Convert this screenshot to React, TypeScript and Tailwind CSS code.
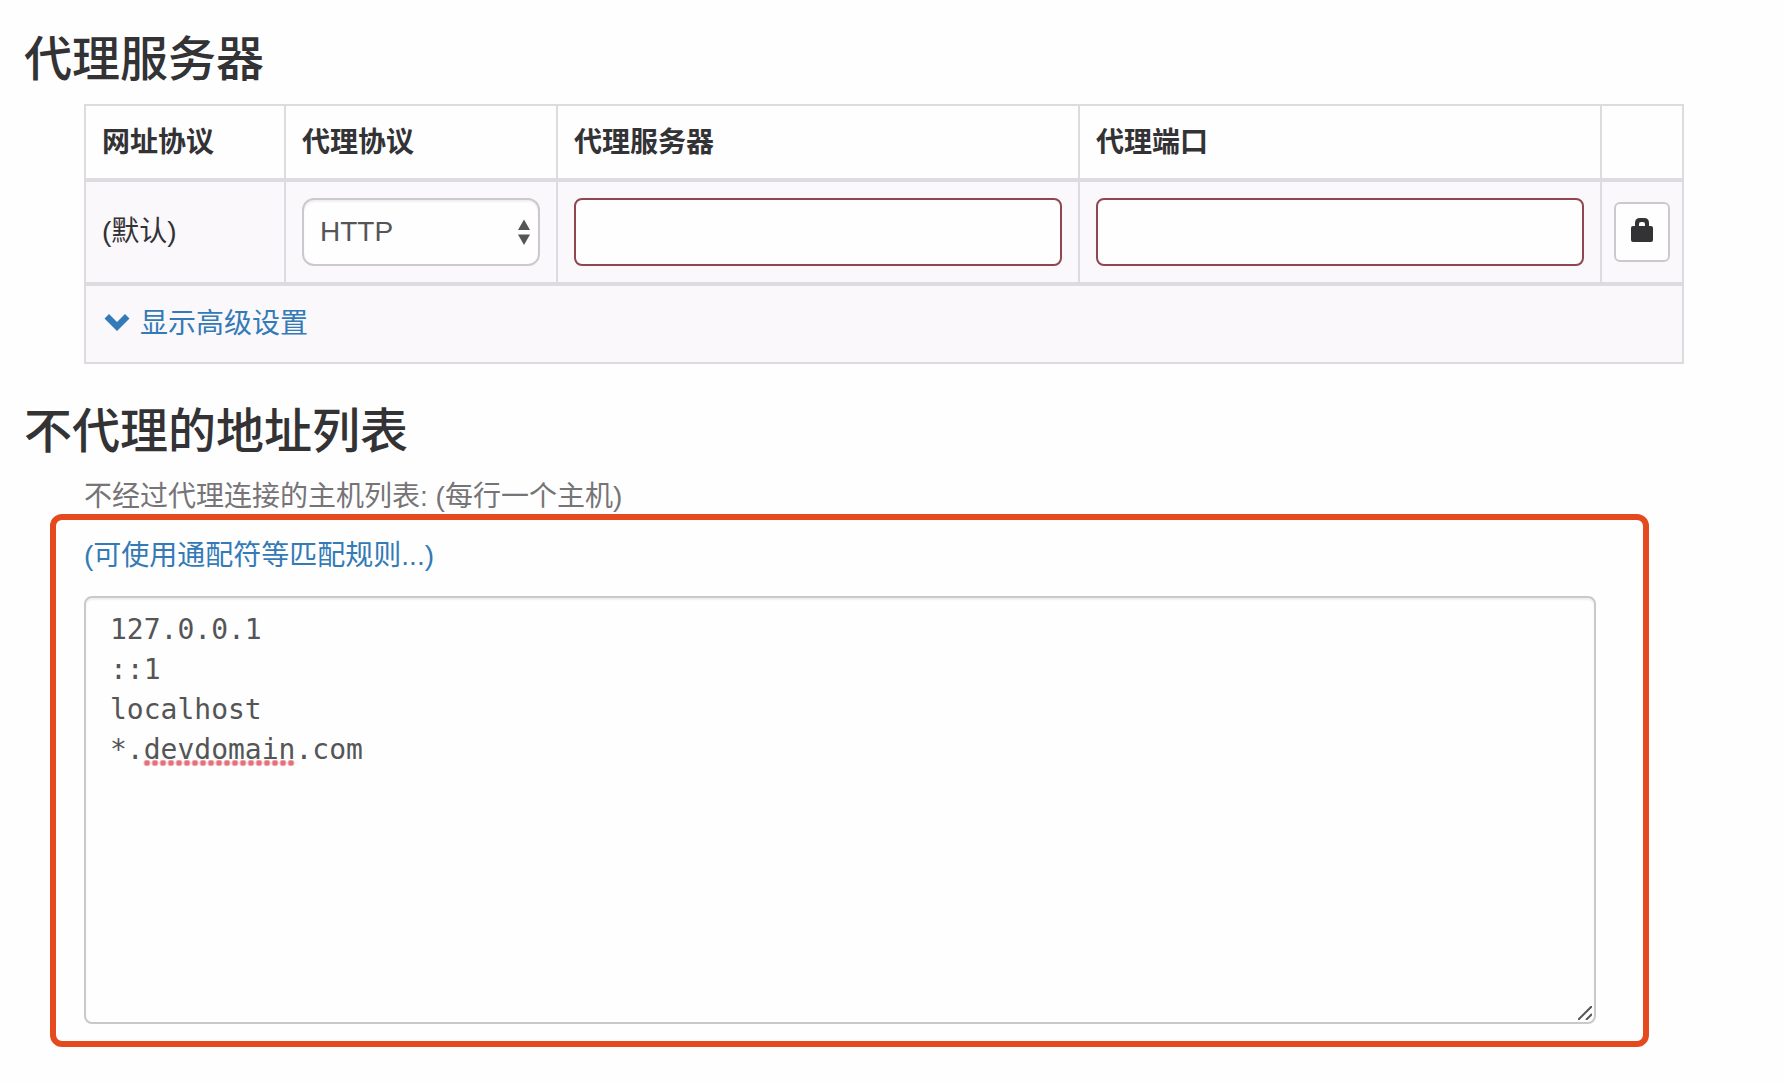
import React from "react";

const inputClass =
  "block h-[68px] w-full rounded-lg border-2 border-[#8f4650] bg-[#fefefe] px-4 text-[28px] text-[#555557] outline-none";

function LockIcon() {
  return (
    <svg width="22" height="24" viewBox="0 0 22 24" aria-hidden="true">
      <path
        fill="#333235"
        fillRule="evenodd"
        d="M4 8V5Q4 0 9 0H13Q18 0 18 5V8H20Q22 8 22 10V22Q22 24 20 24H2Q0 24 0 22V10Q0 8 2 8ZM8 8H14V6Q14 4 12 4H10Q8 4 8 6Z"
      />
    </svg>
  );
}

function ChevronDownIcon() {
  return (
    <svg width="26" height="20" viewBox="0 0 26 20" aria-hidden="true">
      <path fill="#337ab7" d="M5 0L13 8L21 0L25.5 4.5L13 17L0.5 4.5Z" />
    </svg>
  );
}

function SelectArrows() {
  return (
    <svg
      className="pointer-events-none absolute top-1/2 right-2.5 -translate-y-1/2"
      width="12"
      height="26"
      viewBox="0 0 12 26"
      aria-hidden="true"
    >
      <path fill="#555557" d="M6 0.5L12 11H0ZM0 15.5H12L6 26Z" />
    </svg>
  );
}

function ProxyTable() {
  return (
    <table className="w-full table-fixed border-collapse border-2 border-[#dddbdf] text-left text-[28px] leading-10">
      <colgroup>
        <col className="w-[200px]" />
        <col className="w-[272px]" />
        <col />
        <col />
        <col className="w-[82px]" />
      </colgroup>
      <thead>
        <tr className="h-[75px] border-b-4 border-[#dddbdf]">
          <th className="border-x-2 border-[#dddbdf] px-4 pt-0.5 font-bold">网址协议</th>
          <th className="border-x-2 border-[#dddbdf] px-4 pt-0.5 font-bold">代理协议</th>
          <th className="border-x-2 border-[#dddbdf] px-4 pt-0.5 font-bold">代理服务器</th>
          <th className="border-x-2 border-[#dddbdf] px-4 pt-0.5 font-bold">代理端口</th>
          <td className="border-x-2 border-[#dddbdf]" />
        </tr>
      </thead>
      <tbody>
        <tr className="border-b-4 border-[#dddbdf] bg-[#faf8fb]">
          <td className="border-x-2 border-[#dddbdf] p-4">(默认)</td>
          <td className="border-x-2 border-[#dddbdf] p-4">
            <div className="relative">
              <select
                aria-label="代理协议"
                defaultValue="HTTP"
                className="block h-[68px] w-full appearance-none rounded-xl border-2 border-[#cbc9cd] bg-[#fefefe] px-4 text-[28px] text-[#555557] shadow-[inset_0_2px_2px_rgba(0,0,0,0.06)]"
              >
                <option>HTTP</option>
              </select>
              <SelectArrows />
            </div>
          </td>
          <td className="border-x-2 border-[#dddbdf] p-4">
            <input type="text" aria-label="代理服务器" className={inputClass} />
          </td>
          <td className="border-x-2 border-[#dddbdf] p-4">
            <input type="text" aria-label="代理端口" className={inputClass} />
          </td>
          <td className="border-x-2 border-[#dddbdf] px-3">
            <button
              type="button"
              aria-label="代理登录"
              className="flex h-[60px] w-full items-start justify-center rounded-md border-2 border-[#cbc9cd] bg-[#fefefe] pt-3.5"
            >
              <LockIcon />
            </button>
          </td>
        </tr>
        <tr className="h-[79px] bg-[#faf8fb]">
          <td colSpan={5} className="px-4">
            <a href="#advanced" className="inline-flex items-center gap-2.5 pl-0.5 text-[#337ab7]">
              <ChevronDownIcon />
              <span>显示高级设置</span>
            </a>
          </td>
        </tr>
      </tbody>
    </table>
  );
}

function BypassList() {
  return (
    <div className="mr-[135px] ml-[50px] rounded-xl border-6 border-[#e5491e] pt-4 pr-[47px] pb-[17px] pl-7">
      <a href="#rules" className="block w-fit text-[28px] leading-10 text-[#337ab7]">
        (可使用通配符等匹配规则...)
      </a>
      <div className="relative mt-5">
        <textarea
          id="bypass"
          spellCheck={false}
          defaultValue={"127.0.0.1\n::1\nlocalhost\n*.devdomain.com"}
          className="block h-[428px] w-full resize-none rounded-lg border-2 border-[#c9c8cb] bg-[#fefefe] px-6 py-3 font-['DejaVu_Sans_Mono','Noto_Sans_CJK_SC',monospace] text-[28px] leading-10 text-[#555557] shadow-[inset_0_2px_2px_rgba(0,0,0,0.06)] outline-none"
        />
        <span
          aria-hidden="true"
          className="pointer-events-none absolute top-[164px] left-[59px] h-1.5 w-[152px] bg-[radial-gradient(circle_at_center,#e56f7a_2px,transparent_4px)] bg-[length:8px_6px]"
        />
        <svg
          className="pointer-events-none absolute right-1 bottom-1"
          width="14"
          height="14"
          viewBox="0 0 14 14"
          aria-hidden="true"
        >
          <path stroke="#555557" strokeWidth="2" fill="none" d="M0 14L14 0M8 14L14 8" />
        </svg>
      </div>
    </div>
  );
}

export default function App() {
  return (
    <main className="min-h-screen bg-[#fefefe] pt-8 font-['Liberation_Sans','Noto_Sans_CJK_SC',sans-serif] text-[#333235]">
      <section>
        <h2 className="ml-6 text-[48px] leading-[56px] font-medium">代理服务器</h2>
        <div className="mt-4 mr-[100px] ml-[84px]">
          <ProxyTable />
        </div>
      </section>
      <section className="mt-10">
        <h2 className="ml-6 text-[48px] leading-[56px] font-medium">不代理的地址列表</h2>
        <label
          htmlFor="bypass"
          className="mt-5 ml-[84px] block text-[28px] leading-[34px] text-[#767477]"
        >
          不经过代理连接的主机列表: (每行一个主机)
        </label>
        <BypassList />
      </section>
    </main>
  );
}
